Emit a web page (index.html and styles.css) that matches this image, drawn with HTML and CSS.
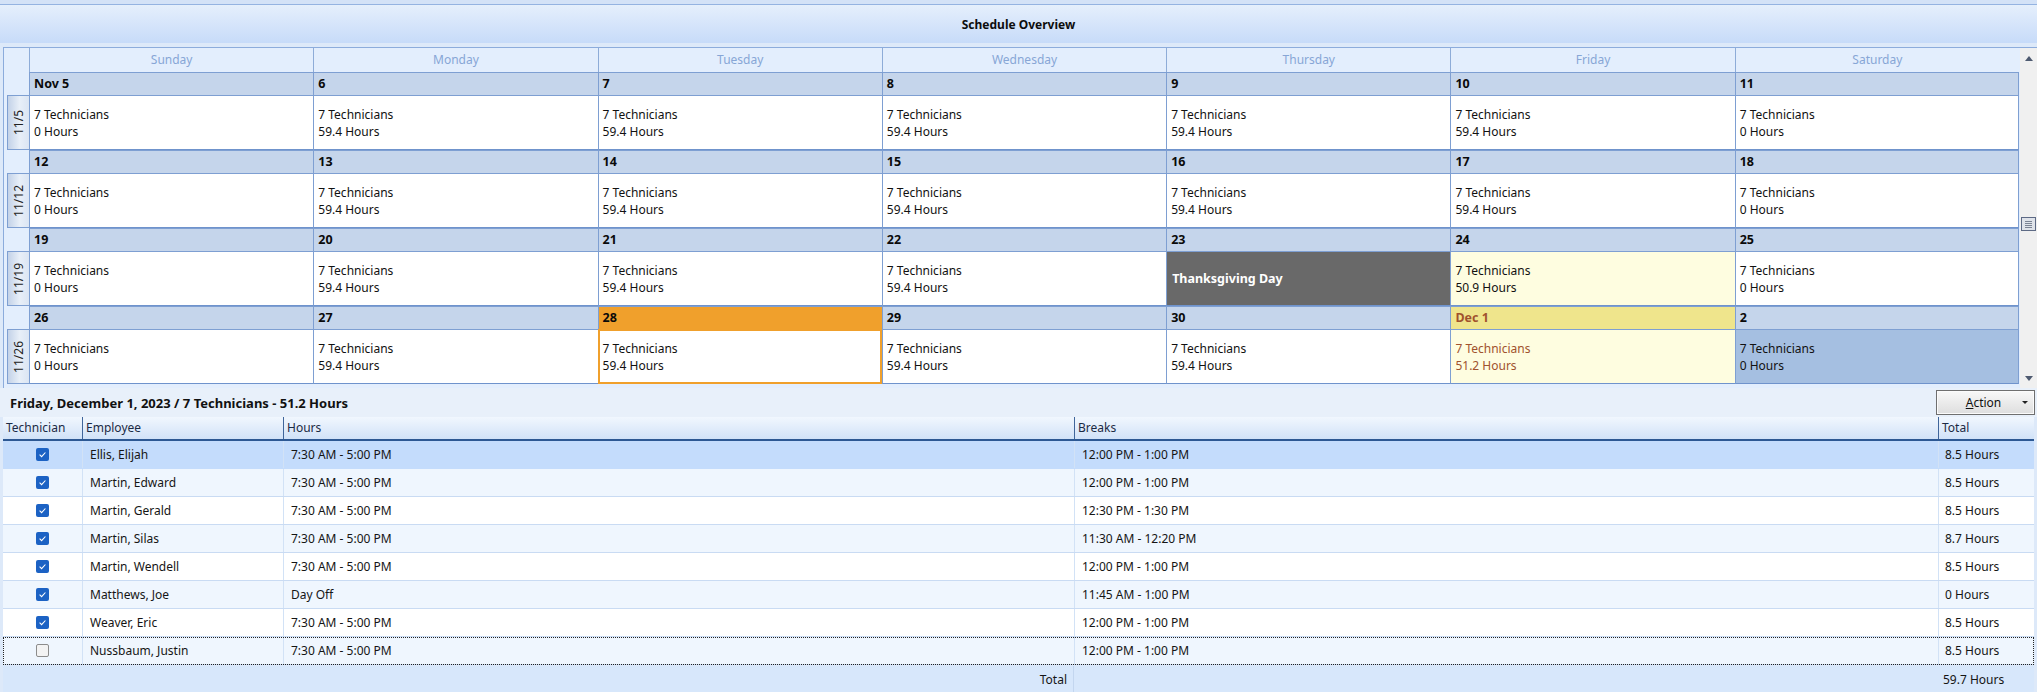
FILE: index.html
```html
<!DOCTYPE html>
<html lang="en">
<head>
<meta charset="utf-8">
<title>Schedule Overview</title>
<link rel="stylesheet" href="styles.css">
</head>
<body>
<div class="topband"></div>
<div class="titlebar">Schedule Overview</div>
<div class="gap"></div>
<div class="calendar">
  <div class="cal-main">
    <div class="daynames">
      <div class="dn-blank"></div>
      <div class="dn">Sunday</div><div class="dn">Monday</div><div class="dn">Tuesday</div><div class="dn">Wednesday</div><div class="dn">Thursday</div><div class="dn">Friday</div><div class="dn">Saturday</div>
    </div>

    <div class="week">
      <div class="wk-blank"></div>
      <div class="dh">Nov 5</div><div class="dh">6</div><div class="dh">7</div><div class="dh">8</div><div class="dh">9</div><div class="dh">10</div><div class="dh last">11</div>
      <div class="wl"><span>11/5</span></div>
      <div class="cell"><div>7 Technicians</div><div>0 Hours</div></div>
      <div class="cell"><div>7 Technicians</div><div>59.4 Hours</div></div>
      <div class="cell"><div>7 Technicians</div><div>59.4 Hours</div></div>
      <div class="cell"><div>7 Technicians</div><div>59.4 Hours</div></div>
      <div class="cell"><div>7 Technicians</div><div>59.4 Hours</div></div>
      <div class="cell"><div>7 Technicians</div><div>59.4 Hours</div></div>
      <div class="cell last"><div>7 Technicians</div><div>0 Hours</div></div>
    </div>

    <div class="week">
      <div class="wk-blank"></div>
      <div class="dh">12</div><div class="dh">13</div><div class="dh">14</div><div class="dh">15</div><div class="dh">16</div><div class="dh">17</div><div class="dh last">18</div>
      <div class="wl"><span>11/12</span></div>
      <div class="cell"><div>7 Technicians</div><div>0 Hours</div></div>
      <div class="cell"><div>7 Technicians</div><div>59.4 Hours</div></div>
      <div class="cell"><div>7 Technicians</div><div>59.4 Hours</div></div>
      <div class="cell"><div>7 Technicians</div><div>59.4 Hours</div></div>
      <div class="cell"><div>7 Technicians</div><div>59.4 Hours</div></div>
      <div class="cell"><div>7 Technicians</div><div>59.4 Hours</div></div>
      <div class="cell last"><div>7 Technicians</div><div>0 Hours</div></div>
    </div>

    <div class="week">
      <div class="wk-blank"></div>
      <div class="dh">19</div><div class="dh">20</div><div class="dh">21</div><div class="dh">22</div><div class="dh">23</div><div class="dh">24</div><div class="dh last">25</div>
      <div class="wl"><span>11/19</span></div>
      <div class="cell"><div>7 Technicians</div><div>0 Hours</div></div>
      <div class="cell"><div>7 Technicians</div><div>59.4 Hours</div></div>
      <div class="cell"><div>7 Technicians</div><div>59.4 Hours</div></div>
      <div class="cell"><div>7 Technicians</div><div>59.4 Hours</div></div>
      <div class="cell holiday"><div>Thanksgiving Day</div></div>
      <div class="cell pale"><div>7 Technicians</div><div>50.9 Hours</div></div>
      <div class="cell last"><div>7 Technicians</div><div>0 Hours</div></div>
    </div>

    <div class="week">
      <div class="wk-blank"></div>
      <div class="dh">26</div><div class="dh">27</div><div class="dh today">28</div><div class="dh">29</div><div class="dh">30</div><div class="dh sel">Dec 1</div><div class="dh last">2</div>
      <div class="wl"><span>11/26</span></div>
      <div class="cell"><div>7 Technicians</div><div>0 Hours</div></div>
      <div class="cell"><div>7 Technicians</div><div>59.4 Hours</div></div>
      <div class="cell today"><div>7 Technicians</div><div>59.4 Hours</div></div>
      <div class="cell"><div>7 Technicians</div><div>59.4 Hours</div></div>
      <div class="cell"><div>7 Technicians</div><div>59.4 Hours</div></div>
      <div class="cell pale sel"><div>7 Technicians</div><div>51.2 Hours</div></div>
      <div class="cell last hi"><div>7 Technicians</div><div>0 Hours</div></div>
    </div>
  </div>
  <div class="scrollbar">
    <div class="sb-arrow"><svg width="8" height="5" viewBox="0 0 8 5"><path d="M0 5 L4 0 L8 5 Z" fill="#4e5a70"/></svg></div>
    <div class="sb-track">
      <div class="sb-thumb"><i></i><i></i><i></i><i></i></div>
    </div>
    <div class="sb-arrow"><svg width="8" height="5" viewBox="0 0 8 5"><path d="M0 0 L8 0 L4 5 Z" fill="#4e5a70"/></svg></div>
  </div>
</div>

<div class="infobar">
  <div class="info-title">Friday, December 1, 2023 / 7 Technicians - 51.2 Hours</div>
  <div class="action-btn"><span class="action-label"><u>A</u>ction</span><svg class="action-arrow" width="6" height="3" viewBox="0 0 6 3"><path d="M0 0 L6 0 L3 3 Z" fill="#222"/></svg></div>
</div>

<div class="grid">
  <div class="ghead">
    <div class="c1">Technician</div><div class="c2">Employee</div><div class="c3">Hours</div><div class="c4">Breaks</div><div class="c5">Total</div>
  </div>
  <div class="grow selected">
    <div class="c1"><span class="cb on"><svg width="13" height="13" viewBox="0 0 13 13"><path d="M3.6 6.7 L5.6 8.6 L9.4 4.5" stroke="#fff" stroke-width="1.1" fill="none"/></svg></span></div>
    <div class="c2">Ellis, Elijah</div><div class="c3">7:30 AM - 5:00 PM</div><div class="c4">12:00 PM - 1:00 PM</div><div class="c5">8.5 Hours</div>
  </div>
  <div class="grow alt">
    <div class="c1"><span class="cb on"><svg width="13" height="13" viewBox="0 0 13 13"><path d="M3.6 6.7 L5.6 8.6 L9.4 4.5" stroke="#fff" stroke-width="1.1" fill="none"/></svg></span></div>
    <div class="c2">Martin, Edward</div><div class="c3">7:30 AM - 5:00 PM</div><div class="c4">12:00 PM - 1:00 PM</div><div class="c5">8.5 Hours</div>
  </div>
  <div class="grow">
    <div class="c1"><span class="cb on"><svg width="13" height="13" viewBox="0 0 13 13"><path d="M3.6 6.7 L5.6 8.6 L9.4 4.5" stroke="#fff" stroke-width="1.1" fill="none"/></svg></span></div>
    <div class="c2">Martin, Gerald</div><div class="c3">7:30 AM - 5:00 PM</div><div class="c4">12:30 PM - 1:30 PM</div><div class="c5">8.5 Hours</div>
  </div>
  <div class="grow alt">
    <div class="c1"><span class="cb on"><svg width="13" height="13" viewBox="0 0 13 13"><path d="M3.6 6.7 L5.6 8.6 L9.4 4.5" stroke="#fff" stroke-width="1.1" fill="none"/></svg></span></div>
    <div class="c2">Martin, Silas</div><div class="c3">7:30 AM - 5:00 PM</div><div class="c4">11:30 AM - 12:20 PM</div><div class="c5">8.7 Hours</div>
  </div>
  <div class="grow">
    <div class="c1"><span class="cb on"><svg width="13" height="13" viewBox="0 0 13 13"><path d="M3.6 6.7 L5.6 8.6 L9.4 4.5" stroke="#fff" stroke-width="1.1" fill="none"/></svg></span></div>
    <div class="c2">Martin, Wendell</div><div class="c3">7:30 AM - 5:00 PM</div><div class="c4">12:00 PM - 1:00 PM</div><div class="c5">8.5 Hours</div>
  </div>
  <div class="grow alt">
    <div class="c1"><span class="cb on"><svg width="13" height="13" viewBox="0 0 13 13"><path d="M3.6 6.7 L5.6 8.6 L9.4 4.5" stroke="#fff" stroke-width="1.1" fill="none"/></svg></span></div>
    <div class="c2">Matthews, Joe</div><div class="c3">Day Off</div><div class="c4">11:45 AM - 1:00 PM</div><div class="c5">0 Hours</div>
  </div>
  <div class="grow">
    <div class="c1"><span class="cb on"><svg width="13" height="13" viewBox="0 0 13 13"><path d="M3.6 6.7 L5.6 8.6 L9.4 4.5" stroke="#fff" stroke-width="1.1" fill="none"/></svg></span></div>
    <div class="c2">Weaver, Eric</div><div class="c3">7:30 AM - 5:00 PM</div><div class="c4">12:00 PM - 1:00 PM</div><div class="c5">8.5 Hours</div>
  </div>
  <div class="grow alt focus">
    <div class="c1"><span class="cb off"></span></div>
    <div class="c2">Nussbaum, Justin</div><div class="c3">7:30 AM - 5:00 PM</div><div class="c4">12:00 PM - 1:00 PM</div><div class="c5">8.5 Hours</div>
  </div>
  <div class="gfoot">
    <div class="f-label">Total</div><div class="c4"></div><div class="c5">59.7 Hours</div>
  </div>
</div>
</body>
</html>
```

FILE: styles.css
```css
* { box-sizing: border-box; }
html, body { margin: 0; padding: 0; }
body {
  width: 2037px;
  height: 692px;
  overflow: hidden;
  background: #dde9f9;
  font-family: "Noto Sans", "Open Sans", sans-serif;
  font-size: 12px;
  color: #111;
}

.topband {
  height: 5px;
  background: #d3e2f7;
  border-bottom: 1px solid #94b3e1;
}
.titlebar {
  height: 38px;
  background: linear-gradient(#e5effc, #c7dbf9);
  display: flex;
  align-items: center;
  justify-content: center;
  font-weight: bold;
  color: #0d0d0d;
}
.gap { height: 4px; background: #dde9f9; }

/* ---------- calendar ---------- */
.calendar {
  display: flex;
  height: 341px;
  margin-left: 3px;
  border-top: 1px solid #8cacdc;
  border-left: 1px solid #8cacdc;
  background: #e3eefd;
}
.cal-main { flex: 1; min-width: 0; }

.daynames {
  display: grid;
  grid-template-columns: 25px repeat(7, 1fr);
  height: 24px;
}
.dn {
  text-align: center;
  line-height: 24px;
  color: #87a6d6;
  border-left: 1px solid #8eacd8;
}

.week {
  display: grid;
  grid-template-columns: 25px repeat(7, 1fr);
  grid-template-rows: 23px 55px;
}
.dh {
  background: #c5d5eb;
  border-top: 1px solid #7e9fd2;
  border-left: 1px solid #7e9fd2;
  font-weight: bold;
  font-size: 12.5px;
  padding-left: 4px;
  line-height: 21px;
  color: #0a0a0a;
}
.dh.last { border-right: 1px solid #7e9fd2; }
.dh.today { background: #f0a02c; }
.dh.sel { background: #efe58c; color: #a0522d; }

.wl {
  margin-left: 3px;
  border-top: 1px solid #7e9fd2;
  border-left: 1px solid #7e9fd2;
  border-bottom: 1px solid #7e9fd2;
  background: linear-gradient(to right, #c3d2e8, #e8eff8 55%, #dbe5f3);
  display: flex;
  align-items: center;
  justify-content: center;
}
.wl span {
  writing-mode: vertical-rl;
  transform: rotate(180deg);
  color: #222;
  font-size: 12px;
}

.cell {
  background: #fff;
  border-top: 1px solid #7e9fd2;
  border-left: 1px solid #7e9fd2;
  border-bottom: 1px solid #6f93cc;
  padding: 0 4px;
  display: flex;
  flex-direction: column;
  justify-content: center;
  line-height: 17px;
  color: #111;
}
.cell.last { border-right: 1px solid #7e9fd2; }
.cell.holiday {
  background: #696969;
  color: #fff;
  font-weight: bold;
  font-size: 12.5px;
  padding-left: 5px;
}
.cell.pale { background: #fefde0; }
.cell.sel { color: #a0522d; }
.cell.hi { background: #a5bfe1; }
.cell.today {
  border: 2px solid #f0a02c;
  padding-left: 3px;
}

.scrollbar {
  width: 17px;
  margin-left: 1px;
  background: #f0f0f0;
  display: flex;
  flex-direction: column;
}
.sb-arrow {
  height: 20px;
  display: flex;
  align-items: center;
  justify-content: center;
}
.sb-track { flex: 1; padding-top: 149px; }
.sb-thumb {
  width: 15px;
  height: 14px;
  margin-left: 1px;
  border: 1px solid #5d6a85;
  background: #dfe3ea;
  display: flex;
  flex-direction: column;
  justify-content: center;
  gap: 1px;
  padding: 0 3px;
}
.sb-thumb i { display: block; height: 1px; background: #7b8494; }

/* ---------- info bar ---------- */
.infobar {
  height: 29px;
  background: #e8f0fa;
  display: flex;
  align-items: center;
  justify-content: space-between;
  padding: 0 2px 0 10px;
}
.info-title { font-weight: bold; font-size: 13px; color: #111; }
.action-btn {
  width: 99px;
  height: 25px;
  border: 1px solid #6f6f6f;
  background: linear-gradient(#f8f8f8, #dedede);
  box-shadow: inset 0 0 0 1px #fbfbfb;
  display: flex;
  align-items: center;
  padding: 0 6px 0 0;
  color: #111;
}
.action-label { flex: 1; text-align: center; padding-left: 8px; }
.action-arrow { flex: none; }

/* ---------- grid ---------- */
.grid {
  margin-left: 3px;
  width: 2031px;
}
.ghead, .grow, .gfoot { display: flex; }
.c1 { width: 79px; flex: none; }
.c2 { width: 201px; flex: none; }
.c3 { width: 791px; flex: none; }
.c4 { width: 864px; flex: none; }
.c5 { flex: 1; }

.ghead {
  height: 24px;
  background: linear-gradient(#f1f7fe, #d1e2f8);
  border-bottom: 2px solid #2d5893;
  color: #1b2a44;
}
.ghead > div {
  padding-left: 3px;
  line-height: 22px;
  border-left: 1px solid #3f659b;
}
.ghead > .c1 { border-left: none; }

.grow {
  height: 28px;
  background: #fff;
  border-bottom: 1px solid #c9dbf3;
  color: #151515;
}
.grow.alt { background: #eff6fe; }
.grow.selected { background: #c4dcfc; border-bottom-color: #c4dcfc; }
.grow.focus { outline: 1px dotted #222; outline-offset: -1px; }
.grow > div {
  display: flex;
  align-items: center;
  border-left: 1px solid #d2e2f6;
  padding-left: 7px;
}
.grow > .c1 { border-left: none; justify-content: center; padding-left: 0; }
.grow > .c5 { padding-left: 6px; }

.cb {
  width: 13px;
  height: 13px;
  border-radius: 2px;
  display: block;
}
.cb svg { display: block; }
.cb.on { background: #1c62c4; }
.cb.off { background: #f3f3f3; border: 1px solid #8c8c8c; }

.gfoot {
  height: 27px;
  background: #d7e7fb;
  margin-top: 1px;
  color: #151515;
}
.gfoot > div { display: flex; align-items: center; }
.f-label {
  width: 1071px;
  flex: none;
  justify-content: flex-end;
  padding-right: 6px;
  border-right: 1px solid #c3d6ef;
}
.gfoot > .c4 { width: 864px; }
.gfoot > .c5 { padding-left: 5px; }
```
